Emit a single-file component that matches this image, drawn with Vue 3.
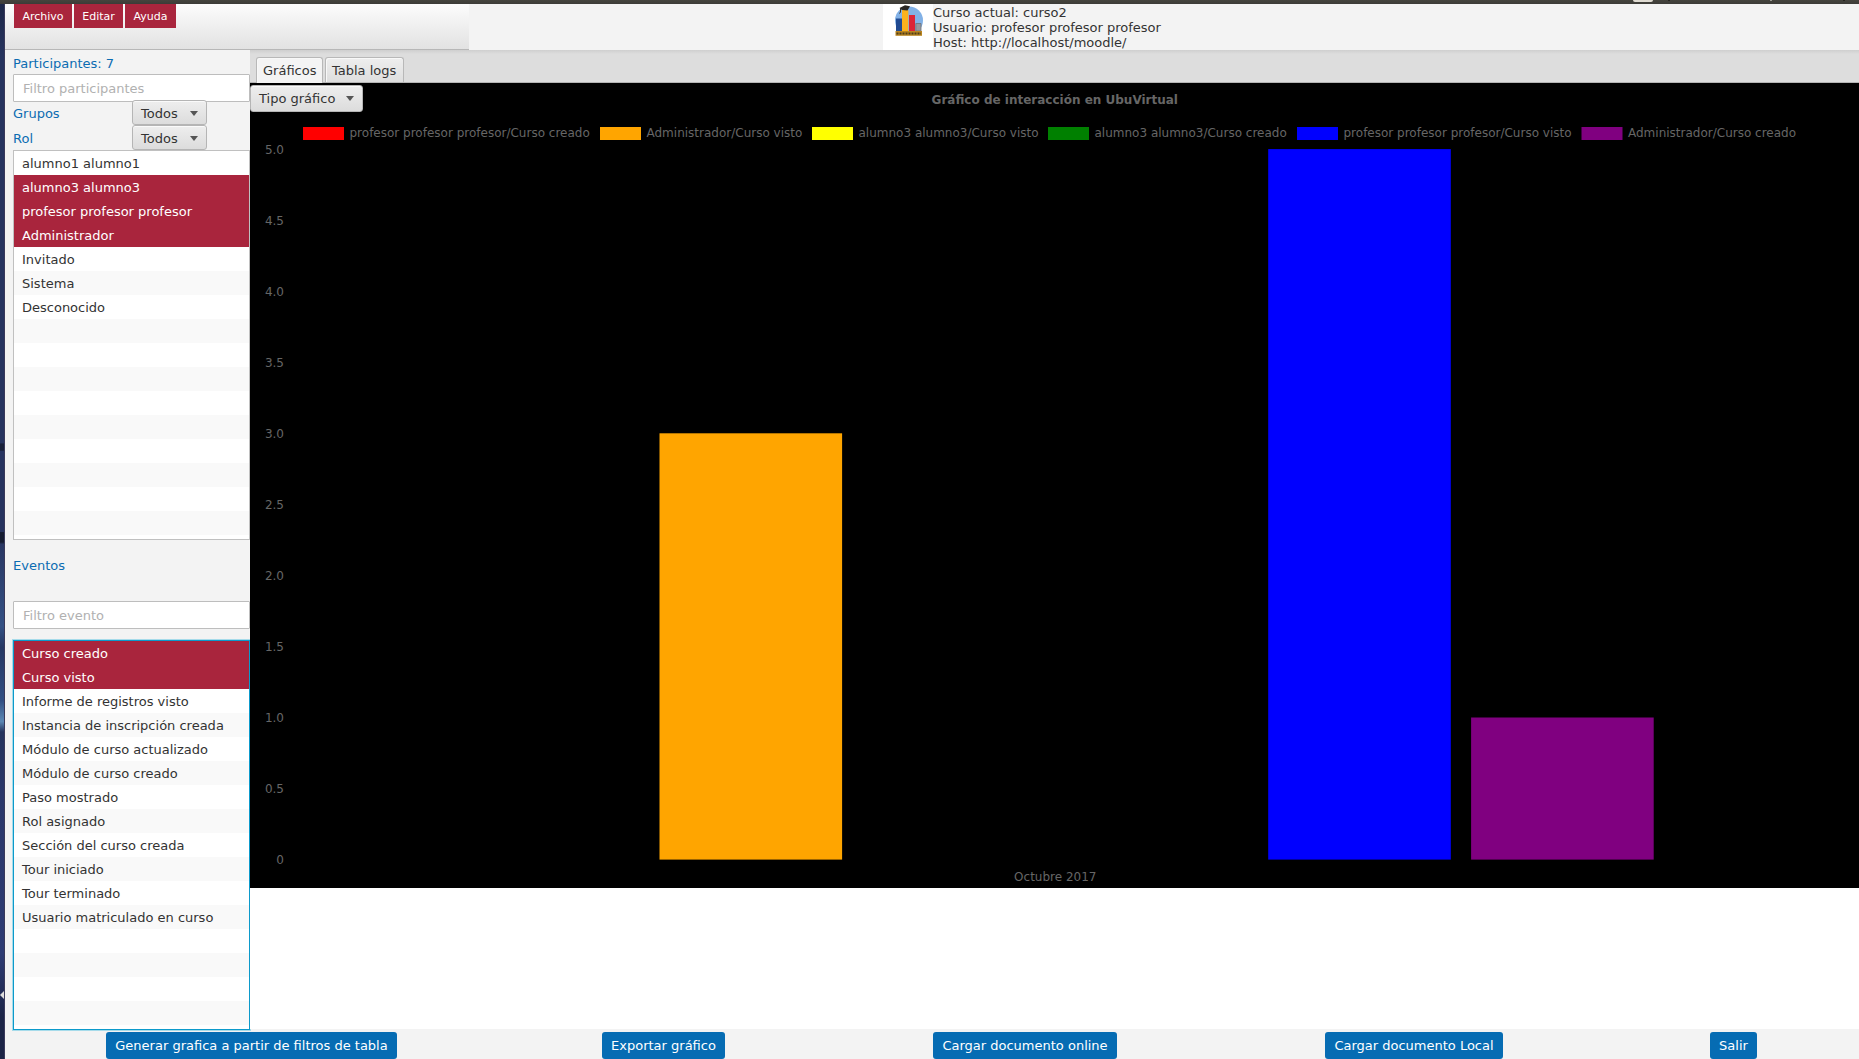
<script setup>
const people = ['alumno1 alumno1', 'alumno3 alumno3', 'profesor profesor profesor', 'Administrador', 'Invitado', 'Sistema', 'Desconocido', '', '', '', '', '', '', '', '', '']
const events = ['Curso creado', 'Curso visto', 'Informe de registros visto', 'Instancia de inscripción creada', 'Módulo de curso actualizado', 'Módulo de curso creado', 'Paso mostrado', 'Rol asignado', 'Sección del curso creada', 'Tour iniciado', 'Tour terminado', 'Usuario matriculado en curso', '', '', '', '']
const legend = [
  { x: 53, color: '#ff0000', label: 'profesor profesor profesor/Curso creado' },
  { x: 350, color: '#ffa500', label: 'Administrador/Curso visto' },
  { x: 562, color: '#ffff00', label: 'alumno3 alumno3/Curso visto' },
  { x: 798, color: '#008000', label: 'alumno3 alumno3/Curso creado' },
  { x: 1047, color: '#0000ff', label: 'profesor profesor profesor/Curso visto' },
  { x: 1331.5, color: '#800080', label: 'Administrador/Curso creado' },
]
const unit = 142.1
const base = 776.6
const ticks = ['0', '0.5', '1.0', '1.5', '2.0', '2.5', '3.0', '3.5', '4.0', '4.5', '5.0']
const bars = [
  { slot: 1, value: 3, color: '#ffa500' },
  { slot: 4, value: 5, color: '#0000ff' },
  { slot: 5, value: 1, color: '#800080' },
]
</script>

<template>
  <div class="screen">
    <div class="panel"><i class="tray"></i><i class="dot d1"></i><i class="dot d2"></i><i class="dot d3"></i></div>
    <div class="main">
      <div class="desktop"><i class="arrow"></i></div>
      <div class="app">
        <header>
          <nav><button class="m1">Archivo</button><button class="m2">Editar</button><button class="m3">Ayuda</button></nav>
          <div class="logo">
            <svg width="30" height="32" viewBox="0 0 30 32">
              <circle cx="15" cy="15.500" r="14" fill="#82b1e6" />
              <path d="M2 13.500h6V26H2z" fill="#204a91" />
              <path d="M8 5h6.300v21H8z" fill="#fbb21c" />
              <path d="M15 10h6v16h-6z" fill="#dc2437" />
              <path d="M21.800 18.500h5.200V26h-5.200z" fill="#95989f" stroke="#6c7179" stroke-width=".8" />
              <path d="M5.500 3 11 .3l5 1-2.500 4.200L8 5z" fill="#292724" />
              <path d="M6.500 3v4l-1 1.500" fill="none" stroke="#35312a" />
              <path d="M1.500 26h26.500v4.800H1.500z" fill="#b98520" />
              <path d="M2.500 28.500h24.500" stroke="#4d3d1b" stroke-width="2.200" stroke-dasharray="2 1" />
            </svg>
          </div>
          <div class="info"><div>Curso actual: curso2</div><div>Usuario: profesor profesor profesor</div><div>Host: http://localhost/moodle/</div></div>
        </header>
        <div class="body">
          <aside>
            <div class="lab participants">Participantes: 7</div>
            <input placeholder="Filtro participantes" />
            <div class="filter first"><span class="lab">Grupos</span><button class="combo">Todos<i></i></button></div>
            <div class="filter"><span class="lab">Rol</span><button class="combo">Todos<i></i></button></div>
            <ul class="people"><li v-for="(p, i) in people" :key="i" :class="{ sel: i > 0 && i < 4 }">{{ p }}</li></ul>
            <div class="lab events-label">Eventos</div>
            <input placeholder="Filtro evento" />
            <ul class="events"><li v-for="(e, i) in events" :key="i" :class="{ sel: i < 2 }">{{ e }}</li></ul>
          </aside>
          <section>
            <div class="tabs"><div class="tab active">Gráficos</div><div class="tab">Tabla logs</div></div>
            <div class="chart">
              <svg width="1609" height="805" viewBox="0 0 1609 805">
                <text class="title" x="804.8" y="21" text-anchor="middle">Gráfico de interacción en UbuVirtual</text>
                <g v-for="l in legend" :key="l.label">
                  <rect :x="l.x" y="44" width="41" height="13" :fill="l.color" />
                  <text :x="l.x + 46.5" y="54">{{ l.label }}</text>
                </g>
                <text v-for="(t, i) in ticks" :key="t" x="34" :y="Math.round(781.3 - i * 71.05)" text-anchor="end">{{ t }}</text>
                <rect v-for="b in bars" :key="b.slot" :x="206.6 + b.slot * 202.9" :y="base - b.value * unit" width="182.600" :height="b.value * unit" :fill="b.color" />
                <text x="805.3" y="798" text-anchor="middle">Octubre 2017</text>
              </svg>
              <button class="combo type">Tipo gráfico<i></i></button>
            </div>
          </section>
        </div>
        <footer>
          <button class="b1">Generar grafica a partir de filtros de tabla</button>
          <button class="b2">Exportar gráfico</button>
          <button class="b3">Cargar documento online</button>
          <button class="b4">Cargar documento Local</button>
          <button class="b5">Salir</button>
        </footer>
      </div>
    </div>
  </div>
</template>

<style scoped>
* { box-sizing: border-box; }
.screen { width: 1859px; height: 1059px; overflow: hidden; display: flex; flex-direction: column; font: 13px/15px "DejaVu Sans", sans-serif; color: #333; }
button, input { font: inherit; margin: 0; white-space: nowrap; }
.panel { position: relative; height: 4px; flex: none; background: linear-gradient(#45443d, #3c3b37); }
.tray { position: absolute; left: 1633px; top: 0; width: 20px; height: 2px; background: #dfdbd2; border-radius: 0 0 2px 2px; }
.dot { position: absolute; top: 0; width: 2px; height: 1px; background: #25241f; }
.d1 { left: 1668px; } .d2 { left: 1770px; background: #9a9992; } .d3 { left: 1843px; }
.main { flex: 1; display: flex; min-height: 0; }
.desktop { position: relative; width: 5px; flex: none; border-right: 1px solid #39395a; background: linear-gradient(#1d2748 0, #26345f 5%, #26345f 41.600%, #182039 41.700%, #182039 42.300%, #26335f 42.400%, #26335f 50%, #151c31 50.100%, #151c31 51%, #293763 51.200%, #345184 59%, #263762 61%, #314e82 66%, #5b88b4 68%, #24335d 69%, #2a376a 75%, #2d3b73 90%, #1b2446 96%, #1b2446); }
.arrow { position: absolute; left: 0; top: 987px; border: 4px solid transparent; border-left: 0; border-right-color: #ddd; }
.app { flex: 1; display: flex; flex-direction: column; background: #f3f3f3; min-width: 0; }
header { height: 46px; flex: none; display: flex; }
nav { width: 464px; height: 46px; padding-left: 9px; display: flex; gap: 2px; background: linear-gradient(#fcfcfc, #e2e2e2); border-bottom: 1px solid #b7b7b7; }
nav button { height: 24px; border: 0; padding: 0; background: #a9253d; color: #fff; font-size: 11px; }
.m1 { width: 58px; } .m2 { width: 49px; } .m3 { width: 51px; }
.logo { margin-left: 414px; width: 50px; padding: 1px 0 0 11px; background: #fff; }
.logo svg { display: block; }
.info { padding-top: 1px; }
.body { height: 979px; flex: none; display: flex; }
aside { width: 245px; padding-left: 8px; display: flex; flex-direction: column; }
.lab { color: #0b6cb2; }
.participants { height: 24px; padding-top: 6px; flex: none; }
input { display: block; width: 237px; height: 28px; flex: none; border: 1px solid #bdbdbd; background: #fff; padding: 0 9px; border-radius: 1px; }
input::placeholder { color: #b1b1b1; opacity: 1; }
.filter { display: flex; height: 25px; flex: none; align-items: center; }
.first { margin-top: -2px; }
.filter .lab { width: 119px; padding-top: 1px; }
.combo { display: flex; align-items: center; width: 75px; height: 25px; padding: 1px 8px 0; justify-content: space-between; border: 1px solid #b5b5b5; border-radius: 3px; background: linear-gradient(#eee, #dcdcdc); box-shadow: inset 0 1px #fafafa; color: #333; }
.combo i { border: 4.500px solid transparent; border-top: 5px solid #555; border-bottom: 0; }
ul { list-style: none; margin: 0; padding: 0; height: 390px; flex: none; border: 1px solid #c0c0c0; background: #fff; }
li { height: 24px; padding: 5px 8px 0; white-space: nowrap; }
li:nth-child(even) { background: #f9f9f9; }
li.sel { background: #a9253d; color: #fff; }
.events-label { height: 61px; padding-top: 18px; flex: none; }
.events { margin-top: 11px; border-color: #0c9acb; box-shadow: 0 0 0 1px #a6dbea; }
section { flex: 1; background: #fff; min-width: 0; }
.tabs { height: 33px; display: flex; padding: 7px 0 0 6px; gap: 2px; background: linear-gradient(#cfcfcf, #ddd 4px); border-bottom: 1px solid #b5b5b5; }
.tab { width: 79px; height: 25px; padding: 5px 0 0 6px; border: 1px solid #b8b8b8; border-bottom: 0; border-radius: 3px 3px 0 0; background: linear-gradient(#eee, #dedede); box-shadow: inset 1px 1px #f8f8f8; white-space: nowrap; }
.tab.active { width: 67px; height: 26px; background: #f4f4f4; }
.chart { position: relative; height: 805px; background: #000; }
.chart svg { display: block; }
.chart text { font: 12px "DejaVu Sans", sans-serif; fill: #666; }
.chart text.title { font-weight: bold; }
.type { position: absolute; left: 0; top: 2px; width: 113px; height: 27px; padding-top: 0; padding-bottom: 1px; }
footer { flex: 1; padding-top: 3px; display: flex; align-items: flex-start; }
footer button { height: 27px; flex: none; padding: 0 0 1px; border: 0; border-radius: 3px; background: #066cb3; color: #fff; text-align: center; }
.b1 { width: 291px; margin-left: 101px; }
.b2 { width: 123px; margin-left: 205px; }
.b3 { width: 184px; margin-left: 208px; }
.b4 { width: 178px; margin-left: 208px; }
.b5 { width: 47px; margin-left: 207px; }
</style>

<style>
body { margin: 0; overflow: hidden; }
</style>
